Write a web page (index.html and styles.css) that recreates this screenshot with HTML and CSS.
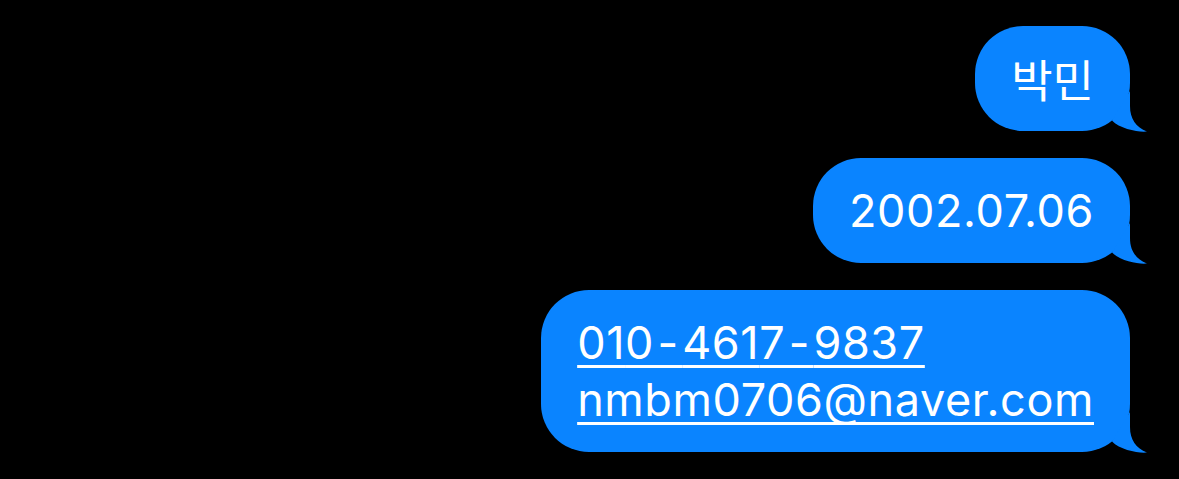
FILE: index.html
```html
<!DOCTYPE html>
<html lang="ko">
<head>
<meta charset="utf-8">
<link rel="stylesheet" href="styles.css">
</head>
<body>
<main class="thread">
  <div class="bubble">
    <span class="text ko">박민</span>
    <svg class="tail" viewBox="0 0 60 41" width="60" height="41"><path d="M40 0 V15 C40 28 46 36 57 40.5 C49 41.5 30 38 22 29.5 Z"/></svg>
  </div>
  <div class="bubble">
    <span class="text">2002.07.06</span>
    <svg class="tail" viewBox="0 0 60 41" width="60" height="41"><path d="M40 0 V15 C40 28 46 36 57 40.5 C49 41.5 30 38 22 29.5 Z"/></svg>
  </div>
  <div class="bubble">
    <span class="text"><a class="link" href="#">01<span class="wide">0-</span>461<span class="wide">7-</span>9837</a><br><a class="link" href="#">nmbm0706@naver.com</a></span>
    <svg class="tail" viewBox="0 0 60 41" width="60" height="41"><path d="M40 0 V15 C40 28 46 36 57 40.5 C49 41.5 30 38 22 29.5 Z"/></svg>
  </div>
</main>
</body>
</html>
```
FILE: styles.css
```css
html, body {
  margin: 0;
  padding: 0;
  background: #000;
  height: 100%;
}
.thread {
  display: flex;
  flex-direction: column;
  align-items: flex-end;
  gap: 27px;
  padding: 26px 49px 0 0;
}
.bubble {
  position: relative;
  background: #0a84ff;
  color: #fff;
  border-radius: 48px;
  padding: 24px 36px 24px 36px;
  font-family: "Inter", "Noto Sans CJK KR", sans-serif;
  font-size: 45px;
  letter-spacing: 0.6px;
  line-height: 57px;
}
.text {
  display: block;
  white-space: nowrap;
}
.ko {
  font-family: "Noto Sans CJK KR", sans-serif;
  font-size: 45px;
  letter-spacing: 0;
}
.link {
  color: #fff;
  text-decoration: underline;
  text-decoration-thickness: 3px;
  text-underline-offset: 6px;
  text-decoration-skip-ink: none;
}
.wide {
  letter-spacing: 4px;
}
.tail {
  position: absolute;
  right: -20px;
  bottom: -0.5px;
  fill: #0a84ff;
  overflow: visible;
}
```
